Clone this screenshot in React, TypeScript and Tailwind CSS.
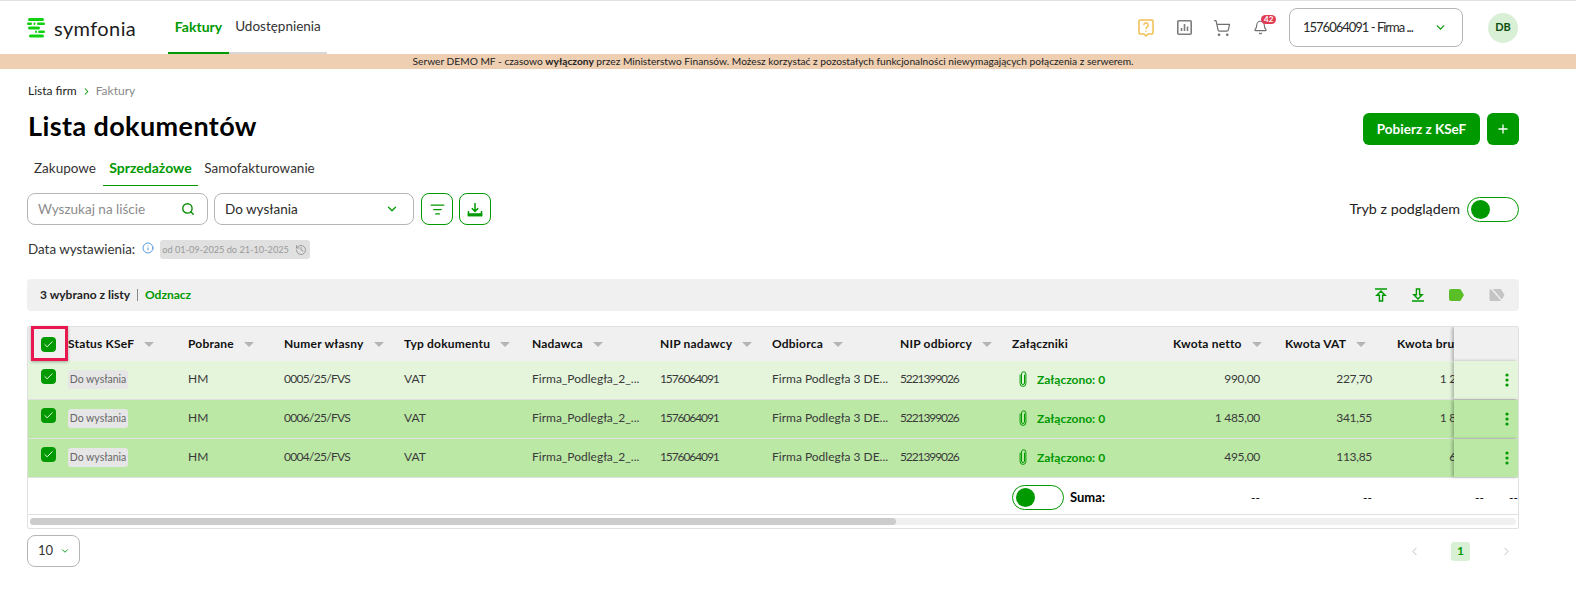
import React from "react";
import { Search, ChevronDown, ChevronLeft, ChevronRight, ChevronRight as Crumb, ListFilter, Info, History, Check, ShoppingCart, Bell, Plus } from "lucide-react";

const gridCols = "grid grid-cols-[40px_120px_96px_120px_128px_128px_112px_128px_112px_136px_112px_112px_113px_34px]";

const rows = [
  { num: "0005/25/FVS", netto: "990,00", vat: "227,70", brutto: "1 217,70", bg: "bg-[#e4f5dc]" },
  { num: "0006/25/FVS", netto: "1 485,00", vat: "341,55", brutto: "1 826,55", bg: "bg-[#bce8a6]" },
  { num: "0004/25/FVS", netto: "495,00", vat: "113,85", brutto: "608,85", bg: "bg-[#bce8a6]" },
];

const SortArrow = () => <span className="ml-[10px] inline-block h-0 w-0 border-x-[5px] border-t-[5px] border-x-transparent border-t-[#b5b5b5]" />;

const Logo = () => (
  <svg width="19" height="20" viewBox="0 0 19 20" fill="#0fd10f">
    <rect x="1" y="0" width="16" height="3" rx="1.5" />
    <rect x="0" y="4.5" width="5" height="2.5" rx="1.2" />
    <rect x="6.5" y="4.5" width="2" height="2.5" rx="1" />
    <rect x="10" y="4.5" width="8" height="2.5" rx="1.2" />
    <rect x="1" y="8.5" width="12" height="3" rx="1.5" />
    <rect x="8" y="12.5" width="2" height="2.5" rx="1" />
    <rect x="11" y="12.5" width="7" height="2.5" rx="1.2" />
    <rect x="2" y="16.5" width="15" height="3" rx="1.5" />
  </svg>
);

const HelpIcon = () => (
  <svg width="16" height="18" viewBox="0 0 16 18" fill="none" stroke="#f0c050" strokeWidth="1.5">
    <path d="M2 1h12a1 1 0 0 1 1 1v12a1 1 0 0 1-1 1h-4l-2 2-2-2H2a1 1 0 0 1-1-1V2a1 1 0 0 1 1-1z" />
    <path d="M5.8 6a2.2 2.2 0 1 1 3.4 1.9C8.4 8.4 8 8.8 8 10M8 11.5v1.2" />
  </svg>
);

const ChartIcon = () => (
  <svg width="15" height="15" viewBox="0 0 15 15" fill="none" stroke="#7d7d7d" strokeWidth="1.6">
    <rect x="0.8" y="0.8" width="13.4" height="13.4" rx="1" />
    <path d="M4.5 11V8M7.5 11V4M10.5 11V6.5" />
  </svg>
);

const SaveIcon = () => (
  <svg width="16" height="15" viewBox="0 0 16 15" fill="none" stroke="#009900" strokeWidth="1.5">
    <path d="M8 1v8M4.8 6.2 8 9.4l3.2-3.2" />
    <path d="M1.5 9v4.5h13V9" />
    <path d="M1.5 12h13v1.5h-13z" fill="#009900" />
  </svg>
);

const UploadBar = () => (
  <svg width="12" height="14" viewBox="0 0 12 14" fill="none" stroke="#009900" strokeWidth="1.4">
    <path d="M0 1h12M6 3 1.8 7.2h2.6V13h3.2V7.2h2.6z" />
  </svg>
);

const DownloadBar = () => (
  <svg width="12" height="14" viewBox="0 0 12 14" fill="none" stroke="#009900" strokeWidth="1.4">
    <path d="M0 13h12M6 11 1.8 6.8h2.6V1h3.2v5.8h2.6z" />
  </svg>
);

const TagIcon = ({ color }: { color: string }) => (
  <svg width="15" height="12" viewBox="0 0 15 12" fill={color}>
    <path d="M2 0h8.5a1.5 1.5 0 0 1 1.2.6L15 6l-3.3 5.4a1.5 1.5 0 0 1-1.2.6H2a2 2 0 0 1-2-2V2a2 2 0 0 1 2-2z" />
  </svg>
);

const TagOffIcon = () => (
  <svg width="16" height="14" viewBox="0 0 16 14">
    <path d="M2 1h9a1.5 1.5 0 0 1 1.2.6L15.5 7l-3.3 5.4a1.5 1.5 0 0 1-1.2.6H2a1.5 1.5 0 0 1-1.5-1.5v-9A1.5 1.5 0 0 1 2 1z" fill="#c4c4c4" />
    <path d="M2 0l12 14" stroke="#f0f0f0" strokeWidth="1.5" />
  </svg>
);

// tall slim clip, lucide's is diagonal
const ClipIcon = () => (
  <svg width="8" height="16" viewBox="0 0 8 16" fill="none" stroke="#009900" strokeWidth="1" strokeLinecap="round">
    <path d="M5.5 4v8a1.5 1.5 0 0 1-3 0V3a2.2 2.2 0 0 1 4.4 0v9.5a2.9 2.9 0 0 1-5.8 0V4" />
  </svg>
);

const Toggle = () => (
  <div className="flex h-[25px] w-[52px] items-center rounded-full border border-[#009900] bg-white pl-[3px]">
    <div className="h-[19px] w-[19px] rounded-full bg-[#009900]" />
  </div>
);

const Checkbox = () => (
  <div className="flex h-[15px] w-[15px] items-center justify-center rounded-[4px] bg-[#009900]">
    <Check size={11} strokeWidth={2} color="#ffffff" />
  </div>
);

const HeaderCell = ({ label, sort = true, amount = false }: { label: string; sort?: boolean; amount?: boolean }) => (
  <div className={`flex items-center whitespace-nowrap ${amount ? "pl-[25px]" : ""}`}>
    <span className="text-[12px] font-bold tracking-[0.2px] text-[#111111]">{label}</span>
    {sort && <SortArrow />}
  </div>
);

export default function App() {
  return (
    <div className="relative min-h-[613px] w-[1576px] overflow-hidden bg-white font-['Lato',sans-serif] text-[#1a1a1a]">
      {/* top bar */}
      <header className="flex h-[54px] items-center border-t border-t-[#e2e2e2] pl-[27px] pr-[58px] shadow-[0_1px_2px_rgba(0,0,0,0.2)]">
        <Logo />
        <span className="ml-[8px] w-[110px] text-[20px] leading-none tracking-[0.4px] text-[#1c1c1c]">symfonia</span>
        <nav className="ml-[4px] flex h-full">
          <div className="flex h-full w-[61px] items-center justify-center border-b-2 border-[#009900] text-[14px] font-bold text-[#009900]">Faktury</div>
          <div className="flex h-full w-[98px] items-center justify-center border-b-2 border-[#d8d8d8] text-[13.5px] text-[#333333]">Udostępnienia</div>
        </nav>
        <div className="ml-auto flex items-center">
          <div className="flex w-[38px] justify-center"><HelpIcon /></div>
          <div className="flex w-[38px] justify-center"><ChartIcon /></div>
          <div className="flex w-[38px] justify-center"><ShoppingCart size={18} strokeWidth={1.6} color="#6f6f6f" /></div>
          <div className="relative flex w-[38px] justify-center">
            <Bell size={15} strokeWidth={1.8} color="#6f6f6f" />
            <span className="absolute left-[20px] top-[-5px] rounded-full bg-[#e23c55] px-[3px] text-[8px] font-bold leading-[9px] text-white">42</span>
          </div>
          <div className="ml-[10px] flex h-[39px] w-[174px] items-center rounded-[8px] border border-[#b5b5b5] pl-[13px] pr-[15px] text-[13px] text-[#2a2a2a]">
            <span className="flex-1 whitespace-nowrap tracking-[-1px]">1576064091 - Firma ...</span>
            <ChevronDown size={13} strokeWidth={2.2} color="#009900" />
          </div>
          <div className="ml-[25px] flex h-[30px] w-[30px] items-center justify-center rounded-full bg-[#d9f0d6] text-[11px] font-bold text-[#0b4d0b]">DB</div>
        </div>
      </header>

      {/* demo banner */}
      <div className="flex h-[15px] items-center justify-center bg-[#efcfb2] pr-[30px] text-[10.2px] text-[#222222]">
        <span>Serwer DEMO MF - czasowo <b>wyłączony</b> przez Ministerstwo Finansów. Możesz korzystać z pozostałych funkcjonalności niewymagających połączenia z serwerem.</span>
      </div>

      <main className="pl-[27px] pr-[57px]">
        <div className="mt-[15px] flex h-[14px] items-center text-[12px]">
          <span className="ml-[1px] text-[#222222]">Lista firm</span>
          <Crumb size={11} strokeWidth={2.2} color="#009900" className="mx-[4px]" />
          <span className="text-[#8a8a8a]">Faktury</span>
        </div>

        <div className="mt-[11px] flex h-[40px] items-center justify-between">
          <h1 className="ml-[1px] mt-[-8px] text-[27px] font-bold leading-none tracking-[0.4px] text-black">Lista dokumentów</h1>
          <div className="flex items-center gap-[7px]">
            <button className="h-[32px] w-[117px] rounded-[6px] bg-[#009900] text-[13.5px] font-bold text-white">Pobierz z KSeF</button>
            <button className="flex h-[32px] w-[32px] items-center justify-center rounded-[6px] bg-[#009900]"><Plus size={14} strokeWidth={2.2} color="#ffffff" /></button>
          </div>
        </div>

        <div className="mt-[9px] flex h-[28px] text-[13.5px]">
          <div className="flex w-[76px] items-center justify-center pb-[8px] text-[#333333]">Zakupowe</div>
          <div className="flex w-[95px] items-center justify-center border-b border-[#009900] pb-[8px] text-[14px] font-bold text-[#009900]">Sprzedażowe</div>
          <div className="flex w-[123px] items-center justify-center pb-[8px] text-[#333333]">Samofakturowanie</div>
        </div>

        <div className="mt-[7px] flex h-[32px] items-center">
          <div className="flex h-full w-[181px] items-center justify-between rounded-[8px] border border-[#b5b5b5] pl-[10px] pr-[12px] text-[13.5px] text-[#8c8c8c]">
            Wyszukaj na liście
            <Search size={14} strokeWidth={2.4} color="#0a8f0a" />
          </div>
          <div className="ml-[6px] flex h-full w-[200px] items-center justify-between rounded-[8px] border border-[#b5b5b5] pl-[10px] pr-[14px] text-[13.5px] text-[#2a2a2a]">
            Do wysłania
            <ChevronDown size={14} strokeWidth={2.2} color="#009900" />
          </div>
          <button className="ml-[7px] flex h-full w-[32px] items-center justify-center rounded-[8px] border border-[#009900]"><ListFilter size={15} strokeWidth={2} color="#009900" /></button>
          <button className="ml-[6px] flex h-full w-[32px] items-center justify-center rounded-[8px] border border-[#009900]"><SaveIcon /></button>
          <span className="ml-auto text-[14.3px] text-[#222222]">Tryb z podglądem</span>
          <div className="ml-[7px]"><Toggle /></div>
        </div>

        <div className="mt-[15px] flex h-[19px] items-center">
          <span className="ml-[1px] text-[13.4px] text-[#333333]">Data wystawienia:</span>
          <Info size={12} strokeWidth={1.6} color="#2f80d0" className="ml-[7px] mt-[-4px]" />
          <div className="ml-[6px] flex h-[19px] w-[150px] items-center rounded-[3px] bg-[#e0e0e0] pl-[2px] text-[9.2px] text-[#9a9a9a]">
            <span className="whitespace-nowrap">od 01-09-2025 do 21-10-2025</span>
            <History size={12} strokeWidth={1.6} color="#8a8a8a" className="ml-auto mr-[3px]" />
          </div>
        </div>

        <div className="mt-[20px] flex h-[32px] items-center rounded-[4px] bg-[#f0f0f0] pl-[13px] pr-[14px] text-[12px]">
          <span className="font-bold text-[#222222]">3 wybrano z listy</span>
          <span className="mx-[7px] h-[12px] w-px bg-[#8a8a8a]" />
          <span className="font-bold text-[#009900]">Odznacz</span>
          <div className="ml-auto flex items-center gap-[25px]">
            <UploadBar />
            <DownloadBar />
            <TagIcon color="#5abf27" />
            <TagOffIcon />
          </div>
        </div>

        {/* table */}
        <div className="relative mt-[15px] h-[203px] w-[1492px] overflow-hidden rounded-[2px] border border-[#e0e0e0]">
          <div className={`${gridCols} relative h-[34px] items-center bg-[#f0f0f0]`}>
            <div className="pl-[13px]"><Checkbox /></div>
            <HeaderCell label="Status KSeF" />
            <HeaderCell label="Pobrane" />
            <HeaderCell label="Numer własny" />
            <HeaderCell label="Typ dokumentu" />
            <HeaderCell label="Nadawca" />
            <HeaderCell label="NIP nadawcy" />
            <HeaderCell label="Odbiorca" />
            <HeaderCell label="NIP odbiorcy" />
            <HeaderCell label="Załączniki" sort={false} />
            <HeaderCell label="Kwota netto" amount />
            <HeaderCell label="Kwota VAT" amount />
            <HeaderCell label="Kwota brutto" amount />
            <div />
            <div className="absolute inset-y-0 right-0 w-[64px] bg-[#f0f0f0] shadow-[-2px_0_3px_rgba(0,0,0,0.25)]" />
          </div>

          {rows.map((r) => (
            <div key={r.num} className={`${gridCols} ${r.bg} relative h-[39px] border-b border-[#e0e0e0] text-[12px] text-[#3a3a3a]`}>
              <div className="pl-[13px] pt-[8px]"><Checkbox /></div>
              <div className="pt-[9px]">
                <span className="inline-flex h-[19px] w-[60px] items-center justify-center rounded-[3px] bg-[#e6e6e6] text-[10.5px] text-[#666666]">Do wysłania</span>
              </div>
              <div className="pt-[9px]">HM</div>
              <div className="pt-[9px] tracking-[-0.7px]">{r.num}</div>
              <div className="pt-[9px]">VAT</div>
              <div className="pt-[9px]">Firma_Podległa_2_...</div>
              <div className="pt-[9px] tracking-[-1.1px]">1576064091</div>
              <div className="pt-[9px]">Firma Podległa 3 DE...</div>
              <div className="pt-[9px] tracking-[-1.1px]">5221399026</div>
              <div className="flex items-start pl-[7px] pt-[10px] font-bold text-[#009900]">
                <ClipIcon />
                <span className="ml-[10px]">Załączono: 0</span>
              </div>
              <div className="pt-[9px] text-right tracking-[-0.3px]">{r.netto}</div>
              <div className="pt-[9px] text-right tracking-[-0.3px]">{r.vat}</div>
              <div className="whitespace-nowrap pt-[9px] text-right tracking-[-0.3px]">{r.brutto}</div>
              <div />
              <div className={`${r.bg} absolute inset-y-0 right-0 flex w-[64px] items-center justify-end pr-[9px] shadow-[-2px_0_3px_rgba(0,0,0,0.25)]`}>
                <svg width="4" height="14" viewBox="0 0 4 14" fill="#009900">
                  <circle cx="2" cy="2" r="1.6" />
                  <circle cx="2" cy="7" r="1.6" />
                  <circle cx="2" cy="12" r="1.6" />
                </svg>
              </div>
            </div>
          ))}

          <div className={`${gridCols} h-[37px] items-center border-b border-[#e0e0e0] pt-[3px] text-[12px] text-black`}>
            <div className="col-span-9" />
            <div className="flex items-center">
              <Toggle />
              <span className="ml-[6px] text-[13px] font-bold">Suma:</span>
            </div>
            <div className="text-right">--</div>
            <div className="text-right">--</div>
            <div className="pr-[1px] text-right">--</div>
            <div className="pr-[1px] text-right">--</div>
          </div>

          <div className="mx-[2px] mt-[3px] h-[7px] rounded-full bg-[#f0f0f0]">
            <div className="h-full w-[866px] rounded-full bg-[#cccccc]" />
          </div>
        </div>

        <div className="mt-[6px] flex h-[32px] items-center">
          <div className="flex h-full w-[53px] items-center rounded-[8px] border border-[#b5b5b5] pl-[10px] text-[13px] text-[#333333]">
            10
            <ChevronDown size={10} strokeWidth={2.2} color="#009900" className="ml-[7px]" />
          </div>
          <div className="ml-auto flex items-center pr-[6px]">
            <ChevronLeft size={13} strokeWidth={1.6} color="#b5b5b5" />
            <span className="mx-[30px] flex h-[19px] w-[19px] items-center justify-center rounded-[3px] bg-[#d9f0d6] text-[12px] font-bold text-[#009900]">1</span>
            <ChevronRight size={13} strokeWidth={1.6} color="#b5b5b5" />
          </div>
        </div>
      </main>

      {/* red annotation round the select-all box */}
      <div className="absolute left-[31px] top-[326px] h-[35px] w-[37px] border-[3px] border-[#e8174f] shadow-[0_1px_3px_rgba(0,0,0,0.3)]" />
    </div>
  );
}
